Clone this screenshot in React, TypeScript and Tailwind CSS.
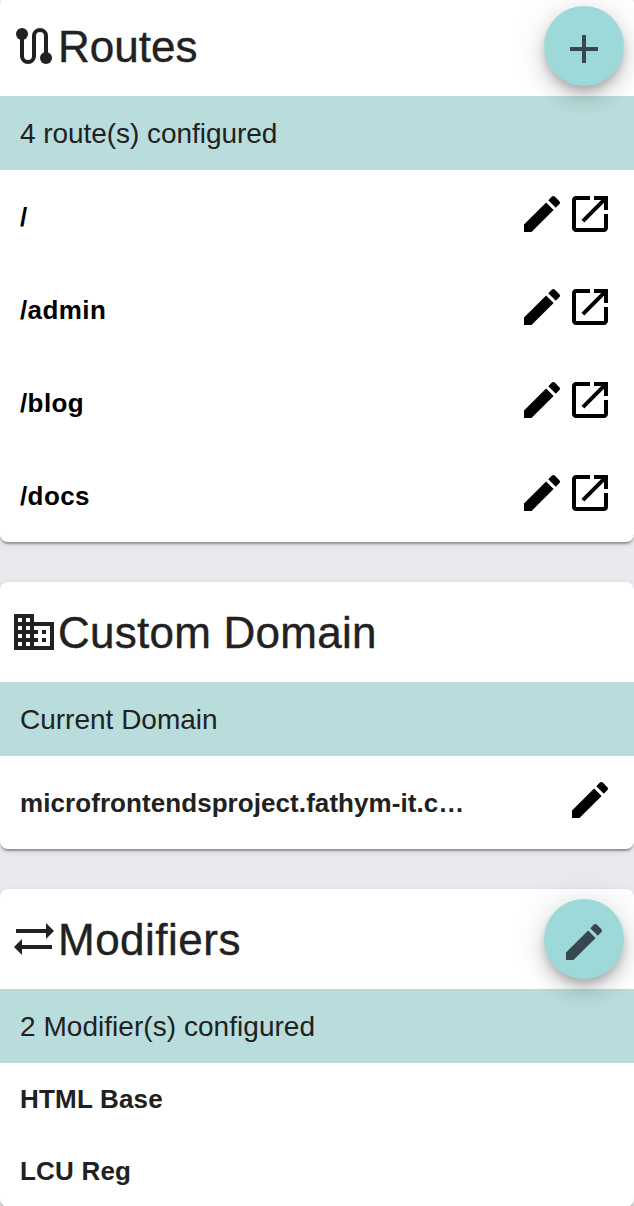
import type { ReactNode } from "react";

const EDIT =
  "M3 17.25V21h3.75L17.81 9.94l-3.75-3.75L3 17.25zM20.71 7.04c.39-.39.39-1.02 0-1.41l-2.34-2.34c-.39-.39-1.02-.39-1.41 0l-1.83 1.83 3.75 3.75 1.83-1.83z";
const OPEN =
  "M19 19H5V5h7V3H5c-1.11 0-2 .9-2 2v14c0 1.1.89 2 2 2h14c1.1 0 2-.9 2-2v-7h-2v7zM14 3v2h3.59l-9.83 9.83 1.41 1.41L19 6.41V10h2V3h-7z";
const ADD = "M19 13h-6v6h-2v-6H5v-2h6V5h2v6h6v2z";
const DOMAIN =
  "M12 7V3H2v18h20V7H12zM6 19H4v-2h2v2zm0-4H4v-2h2v2zm0-4H4V9h2v2zm0-4H4V5h2v2zm4 12H8v-2h2v2zm0-4H8v-2h2v2zm0-4H8V9h2v2zm0-4H8V5h2v2zm10 12h-8v-2h2v-2h-2v-2h2v-2h-2V9h8v10zm-2-8h-2v2h2v-2zm0 4h-2v2h2v-2z";

function Icon({ d }: { d: string }) {
  return (
    <svg viewBox="0 0 24 24" className="size-12 shrink-0" fill="currentColor">
      <path d={d} />
    </svg>
  );
}

function RouteIcon() {
  return (
    <svg viewBox="0 0 48 48" className="size-12 shrink-0" fill="currentColor">
      <path
        d="M12 12V34a6 6 0 0 0 12 0V14a6 6 0 0 1 12 0V36"
        fill="none"
        stroke="currentColor"
        strokeWidth="4"
      />
      <circle cx="12" cy="12" r="6" />
      <circle cx="36" cy="36" r="6" />
    </svg>
  );
}

function SwapIcon() {
  return (
    <svg viewBox="0 0 48 48" className="size-12 shrink-0" fill="currentColor">
      <path d="M6 14H36V8L44 16L36 24V18H6zM42 34H12V40L4 32L12 24V30H42z" />
    </svg>
  );
}

function Card({
  icon,
  title,
  titleClass,
  subtitle,
  subtitleClass,
  action,
  children,
}: {
  icon: ReactNode;
  title: string;
  titleClass: string;
  subtitle: string;
  subtitleClass: string;
  action?: string;
  children: ReactNode;
}) {
  return (
    <section className="relative rounded-lg bg-white shadow-[0_4px_2px_-2px_rgba(0,0,0,0.2),0_2px_2px_0_rgba(0,0,0,0.14),0_2px_6px_0_rgba(0,0,0,0.12)]">
      <header className="flex h-[100px] items-center pl-2.5">
        {icon}
        <h2 className={`pt-0.5 text-[44px] leading-none whitespace-nowrap [-webkit-text-stroke:0.4px_#212121] ${titleClass}`}>
          {title}
        </h2>
      </header>
      <div className="flex h-[74px] items-center bg-[#b9dddc] pt-0.5 pl-5 text-[28px] leading-none whitespace-nowrap">
        <span className={subtitleClass}>{subtitle}</span>
      </div>
      {children}
      {action && (
        <button className="absolute top-2.5 right-2.5 flex size-20 items-center justify-center rounded-full bg-[#9cd9d8] pt-1.5 text-[#37474f] shadow-[0_6px_10px_-2px_rgba(0,0,0,0.2),0_12px_20px_0_rgba(0,0,0,0.14),0_2px_36px_0_rgba(0,0,0,0.12)]">
          <Icon d={action} />
        </button>
      )}
    </section>
  );
}

const ROUTES = ["/", "/admin", "/blog", "/docs"];

export default function App() {
  return (
    <div className="h-[1206px] w-[634px] overflow-hidden bg-[#e9eaee] font-['Liberation_Sans',Arial,sans-serif] text-[#212121]">
      <main className="-mt-1 flex flex-col gap-10">
        <Card
          icon={<RouteIcon />}
          title="Routes"
          titleClass=""
          subtitle="4 route(s) configured"
          subtitleClass="tracking-[-0.05px]"
          action={ADD}
        >
          {ROUTES.map((r) => (
            <div key={r} className="flex h-[93px] items-center justify-between pr-5 pl-5 text-black">
              <span className="text-[26px] leading-none font-bold tracking-[0.4px]">{r}</span>
              <span className="flex pb-[5px]">
                <Icon d={EDIT} />
                <Icon d={OPEN} />
              </span>
            </div>
          ))}
        </Card>
        <Card
          icon={<Icon d={DOMAIN} />}
          title="Custom Domain"
          titleClass="tracking-[0.25px]"
          subtitle="Current Domain"
          subtitleClass=""
        >
          <div className="flex h-[93px] items-center justify-between pr-5 pl-5">
            <span className="text-[26px] leading-none font-bold tracking-[0.07px]">
              microfrontendsproject.fathym-it.c…
            </span>
            <span className="flex pb-[5px] text-black">
              <Icon d={EDIT} />
            </span>
          </div>
        </Card>
        <Card
          icon={<SwapIcon />}
          title="Modifiers"
          titleClass="tracking-[0.5px]"
          subtitle="2 Modifier(s) configured"
          subtitleClass="tracking-[0.04px]"
          action={EDIT}
        >
          {["HTML Base", "LCU Reg"].map((m) => (
            <div
              key={m}
              className="flex h-[72px] items-center pl-5 text-[26px] leading-none font-bold tracking-[0.2px]"
            >
              {m}
            </div>
          ))}
        </Card>
      </main>
    </div>
  );
}
